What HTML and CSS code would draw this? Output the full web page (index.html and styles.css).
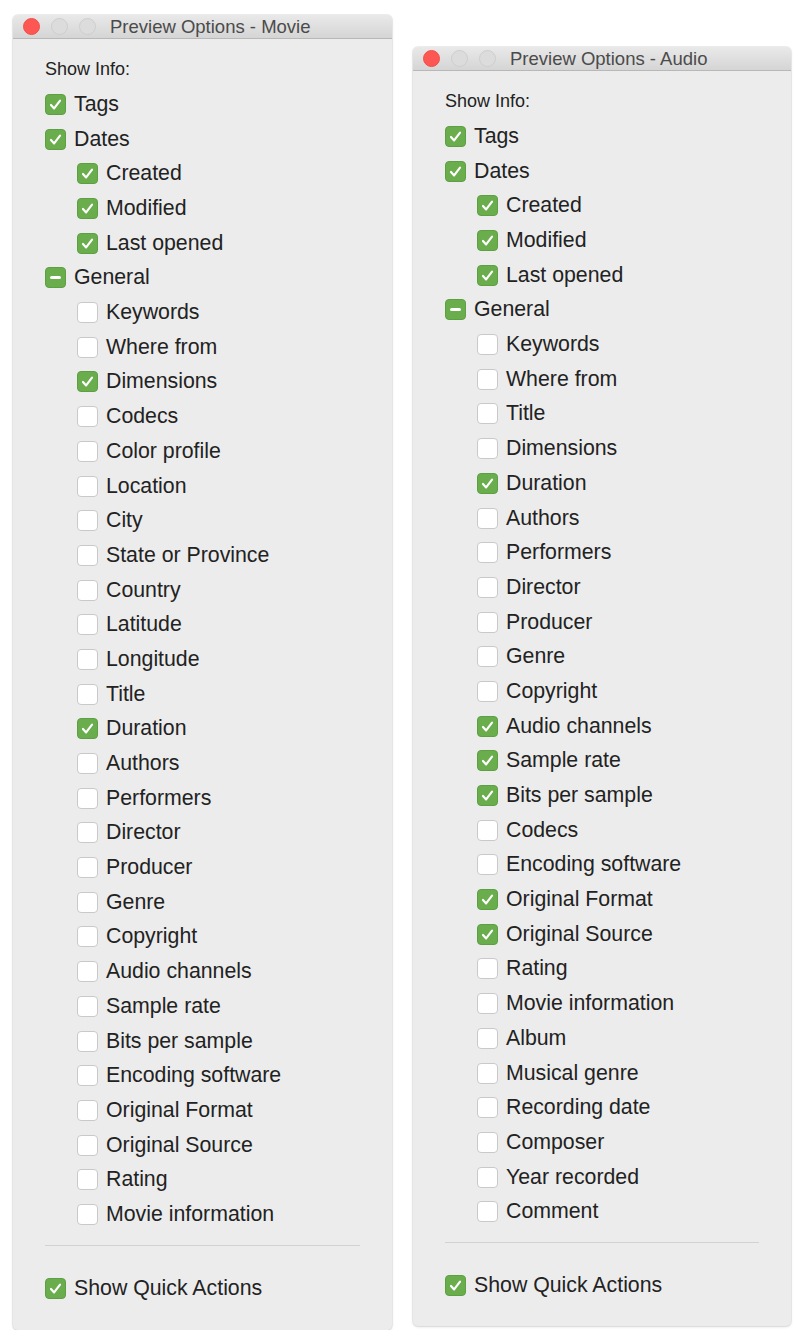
FILE: index.html
```html
<!DOCTYPE html>
<html lang="en">
<head>
    <meta charset="UTF-8">
    <meta name="viewport" content="width=device-width, initial-scale=1.0">
    <title>Preview Options</title>
    <link rel="stylesheet" href="styles.css">
</head>
<body>
<div class="desk">
    <section class="window movie">
        <div class="titlebar">
            <span class="light red"></span>
            <span class="light"></span>
            <span class="light"></span>
            <span class="title">Preview Options - Movie</span>
        </div>
        <div class="content">
            <p class="heading">Show Info:</p>
            <ul class="options">
                <li class="opt"><span class="box on"><svg viewBox="0 0 21 21"><path d="M5.5 11 L9 14.8 L15.5 6.2"/></svg></span>Tags</li>
                <li class="opt"><span class="box on"><svg viewBox="0 0 21 21"><path d="M5.5 11 L9 14.8 L15.5 6.2"/></svg></span>Dates</li>
                <li class="opt sub"><span class="box on"><svg viewBox="0 0 21 21"><path d="M5.5 11 L9 14.8 L15.5 6.2"/></svg></span>Created</li>
                <li class="opt sub"><span class="box on"><svg viewBox="0 0 21 21"><path d="M5.5 11 L9 14.8 L15.5 6.2"/></svg></span>Modified</li>
                <li class="opt sub"><span class="box on"><svg viewBox="0 0 21 21"><path d="M5.5 11 L9 14.8 L15.5 6.2"/></svg></span>Last opened</li>
                <li class="opt"><span class="box mixed"></span>General</li>
                <li class="opt sub"><span class="box"></span>Keywords</li>
                <li class="opt sub"><span class="box"></span>Where from</li>
                <li class="opt sub"><span class="box on"><svg viewBox="0 0 21 21"><path d="M5.5 11 L9 14.8 L15.5 6.2"/></svg></span>Dimensions</li>
                <li class="opt sub"><span class="box"></span>Codecs</li>
                <li class="opt sub"><span class="box"></span>Color profile</li>
                <li class="opt sub"><span class="box"></span>Location</li>
                <li class="opt sub"><span class="box"></span>City</li>
                <li class="opt sub"><span class="box"></span>State or Province</li>
                <li class="opt sub"><span class="box"></span>Country</li>
                <li class="opt sub"><span class="box"></span>Latitude</li>
                <li class="opt sub"><span class="box"></span>Longitude</li>
                <li class="opt sub"><span class="box"></span>Title</li>
                <li class="opt sub"><span class="box on"><svg viewBox="0 0 21 21"><path d="M5.5 11 L9 14.8 L15.5 6.2"/></svg></span>Duration</li>
                <li class="opt sub"><span class="box"></span>Authors</li>
                <li class="opt sub"><span class="box"></span>Performers</li>
                <li class="opt sub"><span class="box"></span>Director</li>
                <li class="opt sub"><span class="box"></span>Producer</li>
                <li class="opt sub"><span class="box"></span>Genre</li>
                <li class="opt sub"><span class="box"></span>Copyright</li>
                <li class="opt sub"><span class="box"></span>Audio channels</li>
                <li class="opt sub"><span class="box"></span>Sample rate</li>
                <li class="opt sub"><span class="box"></span>Bits per sample</li>
                <li class="opt sub"><span class="box"></span>Encoding software</li>
                <li class="opt sub"><span class="box"></span>Original Format</li>
                <li class="opt sub"><span class="box"></span>Original Source</li>
                <li class="opt sub"><span class="box"></span>Rating</li>
                <li class="opt sub"><span class="box"></span>Movie information</li>
            </ul>
            <hr class="sep">
            <div class="opt quick"><span class="box on"><svg viewBox="0 0 21 21"><path d="M5.5 11 L9 14.8 L15.5 6.2"/></svg></span>Show Quick Actions</div>
        </div>
    </section>

    <section class="window audio">
        <div class="titlebar">
            <span class="light red"></span>
            <span class="light"></span>
            <span class="light"></span>
            <span class="title">Preview Options - Audio</span>
        </div>
        <div class="content">
            <p class="heading">Show Info:</p>
            <ul class="options">
                <li class="opt"><span class="box on"><svg viewBox="0 0 21 21"><path d="M5.5 11 L9 14.8 L15.5 6.2"/></svg></span>Tags</li>
                <li class="opt"><span class="box on"><svg viewBox="0 0 21 21"><path d="M5.5 11 L9 14.8 L15.5 6.2"/></svg></span>Dates</li>
                <li class="opt sub"><span class="box on"><svg viewBox="0 0 21 21"><path d="M5.5 11 L9 14.8 L15.5 6.2"/></svg></span>Created</li>
                <li class="opt sub"><span class="box on"><svg viewBox="0 0 21 21"><path d="M5.5 11 L9 14.8 L15.5 6.2"/></svg></span>Modified</li>
                <li class="opt sub"><span class="box on"><svg viewBox="0 0 21 21"><path d="M5.5 11 L9 14.8 L15.5 6.2"/></svg></span>Last opened</li>
                <li class="opt"><span class="box mixed"></span>General</li>
                <li class="opt sub"><span class="box"></span>Keywords</li>
                <li class="opt sub"><span class="box"></span>Where from</li>
                <li class="opt sub"><span class="box"></span>Title</li>
                <li class="opt sub"><span class="box"></span>Dimensions</li>
                <li class="opt sub"><span class="box on"><svg viewBox="0 0 21 21"><path d="M5.5 11 L9 14.8 L15.5 6.2"/></svg></span>Duration</li>
                <li class="opt sub"><span class="box"></span>Authors</li>
                <li class="opt sub"><span class="box"></span>Performers</li>
                <li class="opt sub"><span class="box"></span>Director</li>
                <li class="opt sub"><span class="box"></span>Producer</li>
                <li class="opt sub"><span class="box"></span>Genre</li>
                <li class="opt sub"><span class="box"></span>Copyright</li>
                <li class="opt sub"><span class="box on"><svg viewBox="0 0 21 21"><path d="M5.5 11 L9 14.8 L15.5 6.2"/></svg></span>Audio channels</li>
                <li class="opt sub"><span class="box on"><svg viewBox="0 0 21 21"><path d="M5.5 11 L9 14.8 L15.5 6.2"/></svg></span>Sample rate</li>
                <li class="opt sub"><span class="box on"><svg viewBox="0 0 21 21"><path d="M5.5 11 L9 14.8 L15.5 6.2"/></svg></span>Bits per sample</li>
                <li class="opt sub"><span class="box"></span>Codecs</li>
                <li class="opt sub"><span class="box"></span>Encoding software</li>
                <li class="opt sub"><span class="box on"><svg viewBox="0 0 21 21"><path d="M5.5 11 L9 14.8 L15.5 6.2"/></svg></span>Original Format</li>
                <li class="opt sub"><span class="box on"><svg viewBox="0 0 21 21"><path d="M5.5 11 L9 14.8 L15.5 6.2"/></svg></span>Original Source</li>
                <li class="opt sub"><span class="box"></span>Rating</li>
                <li class="opt sub"><span class="box"></span>Movie information</li>
                <li class="opt sub"><span class="box"></span>Album</li>
                <li class="opt sub"><span class="box"></span>Musical genre</li>
                <li class="opt sub"><span class="box"></span>Recording date</li>
                <li class="opt sub"><span class="box"></span>Composer</li>
                <li class="opt sub"><span class="box"></span>Year recorded</li>
                <li class="opt sub"><span class="box"></span>Comment</li>
            </ul>
            <hr class="sep">
            <div class="opt quick"><span class="box on"><svg viewBox="0 0 21 21"><path d="M5.5 11 L9 14.8 L15.5 6.2"/></svg></span>Show Quick Actions</div>
        </div>
    </section>
</div>
</body>
</html>
```

FILE: styles.css
```css
body{
    margin: 0;
    background-color: #fff;
    font-family: "Liberation Sans", Arial, sans-serif;
    color: #222;
}

.desk{
    display: flex;
    align-items: flex-start;
    gap: 21px;
    padding: 15px 0 0 13px;
}

.window{
    width: 379px;
    background-color: #ececec;
    border-radius: 5px;
    box-shadow: 0 0 0 1px rgba(0,0,0,0.06), 0 1px 3px rgba(0,0,0,0.12);
    overflow: hidden;
}

.audio{
    width: 378px;
    margin-top: 32px;
}

.titlebar{
    height: 23px;
    display: flex;
    align-items: center;
    gap: 11px;
    padding-left: 10px;
    background: linear-gradient(#e9e9e9, #d5d5d5);
    border-bottom: 1px solid #b8b8b8;
}

.light{
    width: 17px;
    height: 17px;
    box-sizing: border-box;
    border-radius: 50%;
    background-color: #dcdcdc;
    border: 1px solid #cdcdcd;
}

.light.red{
    background-color: #fc5753;
    border-color: #f04f4b;
}

.title{
    margin-left: 3px;
    font-size: 18.5px;
    color: #4b4b4b;
}

.content{
    padding: 17.5px 32px 24px 32px;
}

.heading{
    margin: 0 0 6.6px 0;
    font-size: 18px;
    line-height: 24px;
}

.options{
    list-style: none;
    margin: 0;
    padding: 0;
}

.opt{
    height: 34.7px;
    display: flex;
    align-items: center;
    gap: 8px;
    font-size: 21.3px;
}

.opt.sub{
    padding-left: 32px;
}

.box{
    width: 21px;
    height: 21px;
    box-sizing: border-box;
    flex-shrink: 0;
    border-radius: 4px;
    background-color: #fff;
    border: 1px solid #c9c9c9;
    display: flex;
    align-items: center;
    justify-content: center;
}

.box.on, .box.mixed{
    background-color: #69ad4c;
    border-color: #5f9f44;
}

.box svg{
    width: 21px;
    height: 21px;
    fill: none;
    stroke: #fff;
    stroke-width: 2.4;
    stroke-linecap: round;
    stroke-linejoin: round;
}

.box.mixed::after{
    content: "";
    width: 11px;
    height: 3px;
    border-radius: 1.5px;
    background-color: #fff;
}

.sep{
    margin: 13px 0 25.5px 0;
    border: 0;
    border-top: 1px solid #d2d2d2;
}

.quick{
    height: 34.7px;
}

.audio .content{
    padding-bottom: 23px;
}
```
